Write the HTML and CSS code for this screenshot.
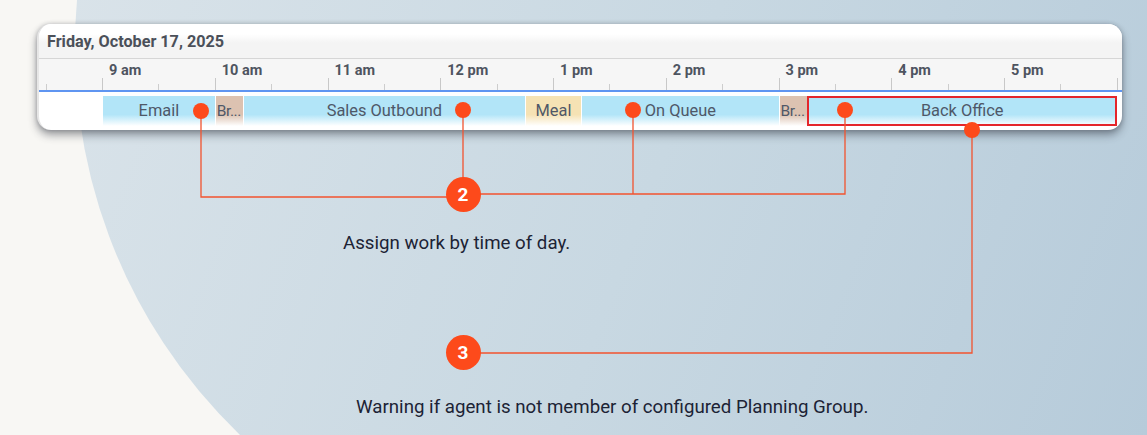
FILE: index.html
```html
<!DOCTYPE html>
<html lang="en">
<head>
<meta charset="utf-8">
<title>Schedule timeline</title>
<link rel="stylesheet" href="styles.css">
</head>
<body>
<div class="stage">
  <svg class="backdrop" viewBox="0 0 1147 435" width="1147" height="435" aria-hidden="true">
    <defs>
      <linearGradient id="bg" x1="0" y1="0" x2="1147" y2="435" gradientUnits="userSpaceOnUse">
        <stop offset="0" stop-color="#dbe4ea"/>
        <stop offset="0.55" stop-color="#c8d8e2"/>
        <stop offset="1" stop-color="#b6cbda"/>
      </linearGradient>
    </defs>
    <path d="M77,0 A537,537 0 0 0 240,435 L1147,435 L1147,0 Z" fill="url(#bg)"/>
  </svg>

  <div class="card">
    <div class="date-bar">Friday, October 17, 2025</div>
    <div class="axis">
      <div class="lead"></div>
      <div class="hour">9 am</div>
      <div class="hour">10 am</div>
      <div class="hour">11 am</div>
      <div class="hour">12 pm</div>
      <div class="hour">1 pm</div>
      <div class="hour">2 pm</div>
      <div class="hour">3 pm</div>
      <div class="hour">4 pm</div>
      <div class="hour">5 pm</div>
      <div class="tail"></div>
    </div>
    <div class="row">
      <div class="seg work s-email">Email</div>
      <div class="seg brk s-br">Br...</div>
      <div class="seg work s-sales">Sales Outbound</div>
      <div class="seg meal s-meal">Meal</div>
      <div class="seg work s-queue">On Queue</div>
      <div class="seg brk s-br">Br...</div>
      <div class="seg work s-back warn">Back Office</div>
    </div>
  </div>

  <p class="caption caption-one">Assign work by time of day.</p>
  <p class="caption caption-two">Warning if agent is not member of configured Planning Group.</p>

  <svg class="callouts" viewBox="0 0 1147 435" width="1147" height="435" aria-hidden="true">
    <g fill="none" stroke="#f2532f" stroke-width="1.3">
      <path d="M201,111 V197 H463"/>
      <path d="M463,110 V194"/>
      <path d="M845,110 V194 H463"/>
      <path d="M633,110 V194"/>
      <path d="M972,130 V353 H463"/>
    </g>
    <g fill="#fd4a1b">
      <circle cx="201" cy="111" r="8"/>
      <circle cx="463" cy="110" r="8"/>
      <circle cx="633" cy="110" r="8"/>
      <circle cx="845" cy="110" r="8"/>
      <circle cx="972" cy="130" r="8"/>
    </g>
  </svg>
  <div class="badge badge-two">2</div>
  <div class="badge badge-three">3</div>
</div>
</body>
</html>
```
FILE: styles.css
```css
* { box-sizing: border-box; }

html, body {
  margin: 0;
  padding: 0;
}

body {
  background: #f8f7f4;
  font-family: Roboto, "Liberation Sans", sans-serif;
}

.stage {
  position: relative;
  width: 1147px;
  height: 435px;
  overflow: hidden;
  padding-top: 24px;
}

.backdrop,
.callouts {
  position: absolute;
  left: 0;
  top: 0;
  pointer-events: none;
}

.card {
  position: relative;
  margin-left: 37px;
  width: 1085px;
  height: 106px;
  background: #fff;
  border-radius: 14px;
  overflow: hidden;
  box-shadow: 0 5px 9px rgba(40, 45, 55, 0.45), 0 0 4px rgba(40, 45, 55, 0.25);
  border-left: 2px solid #e6e6e6;
}

.date-bar {
  height: 35px;
  padding: 9px 0 0 8px;
  font-size: 16.2px;
  line-height: 17px;
  font-weight: 700;
  color: #4b5059;
  background: linear-gradient(#ffffff 0, #ffffff 30%, #f4f4f4 55%, #f4f4f4 100%);
  border-bottom: 1px solid #d6d6d6;
}

.axis {
  display: flex;
  height: 33px;
  background: #f6f6f6;
  border-bottom: 2px solid #5f95f1;
}

.lead,
.hour,
.tail {
  position: relative;
  flex: none;
}

.lead { width: 63px; }
.hour { width: 112.75px; }
.tail { flex: 1; }

.hour {
  padding: 4px 0 0 7px;
  font-size: 14.5px;
  line-height: 16px;
  font-weight: 700;
  color: #4e5460;
}

.hour::before,
.tail::before {
  content: "";
  position: absolute;
  left: 0;
  bottom: 0;
  width: 1px;
  height: 12px;
  background: #c8c8c8;
}

.hour::after,
.lead::after {
  content: "";
  position: absolute;
  left: 50%;
  bottom: 0;
  width: 1px;
  height: 6px;
  background: #cdcdcd;
}

.lead::after { left: 7px; }

.row {
  display: grid;
  grid-template-columns: 63px repeat(36, 28.1875px) 1fr;
  height: 38px;
  padding-top: 4px;
}

.seg {
  height: 30px;
  border-left: 1px solid #fff;
  font-size: 16.4px;
  line-height: 30px;
  color: #4f5868;
  white-space: nowrap;
  overflow: hidden;
  text-align: center;
}

.work { background: linear-gradient(#b2e5f8 0, #b2e5f8 62%, #ffffff 100%); }
.meal { background: linear-gradient(#f5e2b4 0, #f5e2b4 62%, #ffffff 100%); }
.brk {
  background: linear-gradient(#dcc2b1 0, #dcc2b1 62%, #ffffff 100%);
  text-align: left;
  padding-left: 1px;
  font-size: 15.5px;
  letter-spacing: -0.4px;
}

.s-email { grid-column: 2 / span 4; }
.s-br    { grid-column: span 1; }
.s-sales { grid-column: span 10; }
.s-meal  { grid-column: span 2; }
.s-queue { grid-column: span 7; }
.s-back  { grid-column: span 11; }

.warn {
  outline: 2px solid #e4262b;
  outline-offset: -2px;
}

.caption {
  margin: 0;
  font-size: 18.7px;
  line-height: 20px;
  color: #1c2335;
  position: relative;
}

.caption-one {
  margin-top: 103px;
  margin-left: 343px;
}

.caption-two {
  margin-top: 144px;
  margin-left: 356px;
}

.badge {
  position: absolute;
  width: 35px;
  height: 35px;
  border-radius: 50%;
  background: #fd4a1b;
  color: #fff;
  font-size: 19px;
  font-weight: 700;
  line-height: 35px;
  text-align: center;
}

.badge-two { left: 445.5px; top: 176.5px; }
.badge-three { left: 445.5px; top: 334.5px; }
```
